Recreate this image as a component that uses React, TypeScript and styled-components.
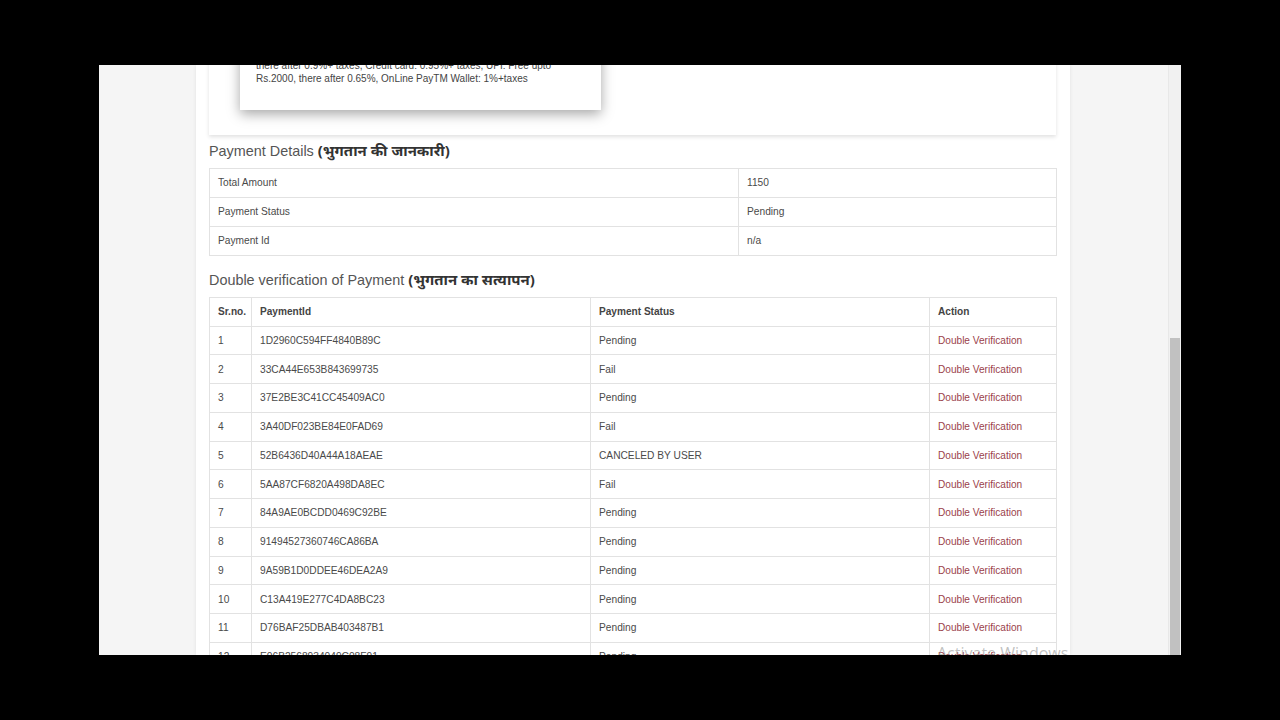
import styled, { createGlobalStyle } from "styled-components";

const GlobalStyle = createGlobalStyle`
	html, body {
		margin: 0;
		padding: 0;
		background: #000;
	}
	* {
		box-sizing: border-box;
	}
`;

const Screen = styled.div`
	width: 1280px;
	height: 720px;
	padding: 65px 99px;
	background: #000;
	font-family: "Liberation Sans", Arial, "Noto Sans", sans-serif;
`;

const Viewport = styled.div`
	position: relative;
	display: flex;
	width: 1082px;
	height: 590px;
	overflow: hidden;
	background: #f5f5f5;
`;

const PageArea = styled.div`
	flex: 1;
	display: flex;
	padding-left: 97px;
	overflow: hidden;
`;

const Container = styled.div`
	width: 874px;
	flex-shrink: 0;
	background: #fff;
	padding: 0 14px 0 13px;
	box-shadow: 0 0 4px rgba(0, 0, 0, 0.08);
`;

const FeeCard = styled.div`
	margin-top: -53px;
	padding: 20px 31px 25px;
	background: #fff;
	box-shadow: 0 2px 4px rgba(0, 0, 0, 0.12);
`;

const FeeBox = styled.div`
	width: 361px;
	padding: 13px 16px 24px;
	background: #fff;
	box-shadow: 0 4px 12px rgba(0, 0, 0, 0.35);
	font-size: 10px;
	line-height: 13.5px;
	color: #444;
	white-space: nowrap;
`;

const Heading = styled.h3<{ $top: number }>`
	margin: ${(p) => p.$top}px 0 8px;
	font-size: 14.4px;
	line-height: 18px;
	font-weight: normal;
	color: #555;

	& b {
		font-size: 15px;
		color: #333;
		font-family: "Noto Sans", "Liberation Sans", sans-serif;
	}
`;

const Table = styled.table`
	width: 847px;
	border-collapse: collapse;
	table-layout: fixed;
	font-size: 10.2px;
	color: #4a4a4a;
`;

const Cell = styled.td<{ $h?: number }>`
	height: ${(p) => p.$h ?? 29}px;
	padding: 0 8px;
	border: 1px solid #e2e2e2;
	vertical-align: middle;
	white-space: nowrap;
	overflow: hidden;
`;

const HeadCell = styled(Cell).attrs({ as: "th" })`
	text-align: left;
	font-weight: bold;
	font-size: 10.1px;
	color: #444;
`;

const VerifyLink = styled.a`
	font-size: 10.1px;
	color: #9b3f4b;
	text-decoration: none;
	cursor: pointer;
`;

const Scrollbar = styled.div`
	width: 13px;
	display: flex;
	flex-direction: column;
	justify-content: flex-end;
	background: #f1f1f1;
	border-left: 1px solid #e8e8e8;
`;

const Thumb = styled.div`
	height: 317px;
	margin: 0 1px;
	background: #c1c1c1;
`;

const Watermark = styled.div`
	position: absolute;
	left: 838px;
	bottom: -8px;
	font-family: "Open Sans", "Noto Sans", sans-serif;
	font-size: 16px;
	line-height: 20px;
	color: rgba(150, 150, 150, 0.6);
	pointer-events: none;
`;

const details = [
	["Total Amount", "1150"],
	["Payment Status", "Pending"],
	["Payment Id", "n/a"],
];

const payments = [
	["1D2960C594FF4840B89C", "Pending"],
	["33CA44E653B843699735", "Fail"],
	["37E2BE3C41CC45409AC0", "Pending"],
	["3A40DF023BE84E0FAD69", "Fail"],
	["52B6436D40A44A18AEAE", "CANCELED BY USER"],
	["5AA87CF6820A498DA8EC", "Fail"],
	["84A9AE0BCDD0469C92BE", "Pending"],
	["91494527360746CA86BA", "Pending"],
	["9A59B1D0DDEE46DEA2A9", "Pending"],
	["C13A419E277C4DA8BC23", "Pending"],
	["D76BAF25DBAB403487B1", "Pending"],
	["E06B2568934049C08F91", "Pending"],
	["F1A27C90B3D54E66A0C2", "Pending"],
];

function App() {
	return (
		<Screen>
			<GlobalStyle />
			<Viewport>
				<PageArea>
					<Container>
						<FeeCard>
							<FeeBox>
								<div>Net Banking: 1%+ taxes, Debit card: upto Rs.2000, 0.4%+ taxes,</div>
								<div>there after 0.9%+ taxes, Credit card: 0.95%+ taxes, UPI: Free upto</div>
								<div>Rs.2000, there after 0.65%, OnLine PayTM Wallet: 1%+taxes</div>
							</FeeBox>
						</FeeCard>

						<Heading $top={6}>
							Payment Details <b>(भुगतान की जानकारी)</b>
						</Heading>
						<Table>
							<colgroup>
								<col style={{ width: 529 }} />
								<col style={{ width: 318 }} />
							</colgroup>
							<tbody>
								{details.map(([label, value]) => (
									<tr key={label}>
										<Cell>{label}</Cell>
										<Cell>{value}</Cell>
									</tr>
								))}
							</tbody>
						</Table>

						<Heading $top={14}>
							Double verification of Payment <b>(भुगतान का सत्यापन)</b>
						</Heading>
						<Table>
							<colgroup>
								<col style={{ width: 42 }} />
								<col style={{ width: 339 }} />
								<col style={{ width: 339 }} />
								<col style={{ width: 127 }} />
							</colgroup>
							<thead>
								<tr>
									<HeadCell>Sr.no.</HeadCell>
									<HeadCell>PaymentId</HeadCell>
									<HeadCell>Payment Status</HeadCell>
									<HeadCell>Action</HeadCell>
								</tr>
							</thead>
							<tbody>
								{payments.map(([id, status], i) => (
									<tr key={id}>
										<Cell $h={28.75}>{i + 1}</Cell>
										<Cell $h={28.75}>{id}</Cell>
										<Cell $h={28.75}>{status}</Cell>
										<Cell $h={28.75}>
											<VerifyLink>Double Verification</VerifyLink>
										</Cell>
									</tr>
								))}
							</tbody>
						</Table>
					</Container>
				</PageArea>
				<Scrollbar>
					<Thumb />
				</Scrollbar>
				<Watermark>Activate Windows</Watermark>
			</Viewport>
		</Screen>
	);
}

export default App;
